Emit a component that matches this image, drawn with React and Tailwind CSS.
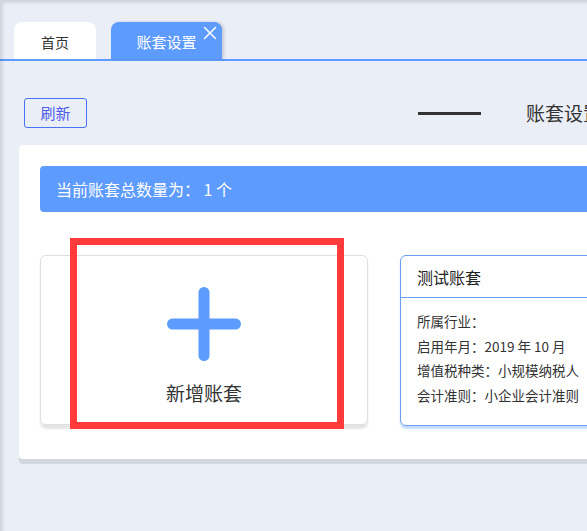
import React from "react";
import { X } from "lucide-react";

const BLUE = "#5e9bff";

const INFO = [
  "所属行业：",
  "启用年月：2019 年 10 月",
  "增值税种类：小规模纳税人",
  "会计准则：小企业会计准则",
];

function PlusIcon() {
  return (
    <svg width="74" height="74" viewBox="0 0 74 74">
      <path
        d="M5.5 37 H68.5 M37 5.5 V68.5"
        stroke={BLUE}
        strokeWidth="11"
        strokeLinecap="round"
        fill="none"
      />
    </svg>
  );
}

export default function App() {
  return (
    <div
      className="relative w-[587px] h-[531px] overflow-hidden bg-[#eaeef7] text-[#333]"
      style={{ fontFamily: '"Noto Sans CJK SC", "Noto Sans", sans-serif' }}
    >
      {/* edge shadows */}
      <div className="pointer-events-none absolute inset-0 z-20 shadow-[inset_3px_3px_3px_rgba(0,0,0,0.1)]" />

      {/* Tabs */}
      <div className="flex items-end gap-[15px] pl-[14px] pt-[22px] border-b-2 border-[#5e9bff]">
        <div className="flex h-[37px] w-[82px] items-center justify-center rounded-t-[8px] bg-white pt-[3px] text-[14px] text-[#333]">
          首页
        </div>
        <div className="relative flex h-[37px] w-[111px] items-center justify-center rounded-t-[8px] bg-[#5e9bff] pt-[3px] text-[15px] text-white shadow-[2px_0_3px_rgba(0,0,0,0.15)]">
          账套设置
          <X className="absolute right-[1px] top-[0px]" size={22} strokeWidth={1.6} />
        </div>
      </div>

      {/* Toolbar */}
      <div className="flex w-[900px] items-center pl-[24px] pt-[37px]">
        <button className="h-[30px] w-[63px] rounded-[3px] border border-[#4a72f5] text-[15px] text-[#4f5cec]">
          刷新
        </button>
        <div className="ml-[331px] h-[3px] w-[63px] bg-[#333]" />
        <div className="ml-[45px] text-[19px] leading-[24px] text-[#333]">账套设置</div>
        <div className="ml-[45px] h-[3px] w-[63px] bg-[#333]" />
      </div>

      {/* Panel */}
      <div className="ml-[19px] mt-[17px] w-[900px] rounded-[4px] bg-white px-[21px] pt-[21px] pb-[33px] shadow-[0_5px_0_#d3d7e0]">
        <div className="flex h-[46px] items-center rounded-[4px] bg-[#5e9bff] pl-[16px] text-[16px] text-white">
          当前账套总数量为： 1 个
        </div>

        <div className="mt-[43px] flex gap-[32px]">
          {/* Add card */}
          <div className="relative flex h-[170px] w-[328px] flex-col items-center rounded-[6px] border border-[#dcdfe6] pt-[31px] shadow-[0_4px_2px_rgba(0,0,0,0.1)]">
            <PlusIcon />
            <div className="mt-[22px] text-[19px] leading-[20px] text-[#333]">新增账套</div>
            <div className="absolute left-[29px] top-[-18px] z-10 h-[191px] w-[274px] border-[7px] border-[#ff3a3a]" />
          </div>

          {/* Account card */}
          <div className="h-[171px] w-[328px] rounded-[6px] border border-[#6a9ff0] shadow-[0_3px_2px_#c6dcff]">
            <div className="flex h-[42px] items-center border-b border-[#6a9ff0] pl-[16px] text-[16px] text-[#222]">
              测试账套
            </div>
            <div className="pl-[16px] pt-[11px] text-[13.5px] leading-[24.6px] text-[#333]">
              {INFO.map((line) => (
                <div key={line}>{line}</div>
              ))}
            </div>
          </div>
        </div>
      </div>
    </div>
  );
}
